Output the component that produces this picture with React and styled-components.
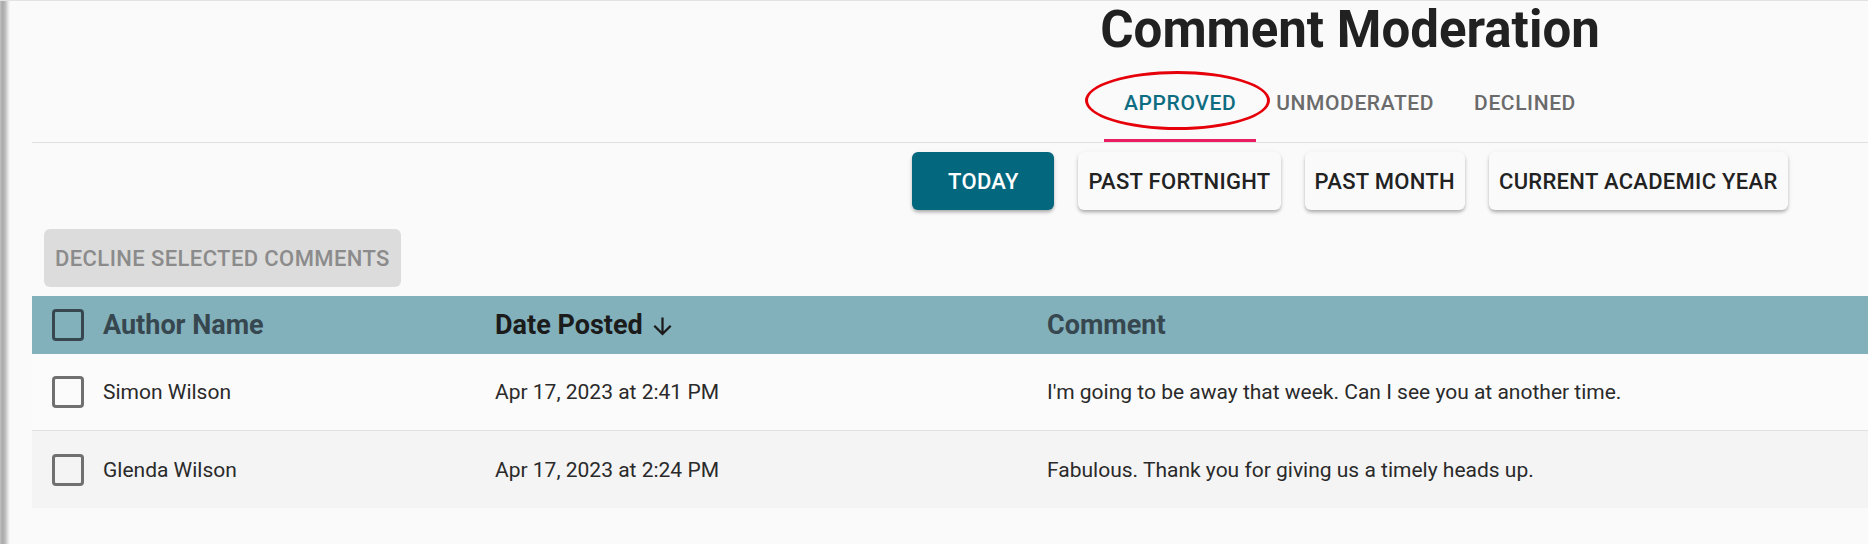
import React, { useState } from "react";
import styled, { createGlobalStyle, css } from "styled-components";

const GlobalStyle = createGlobalStyle`
  html, body {
    margin: 0;
    padding: 0;
    overflow: hidden;
    background: #fafafa;
  }
  body {
    font-family: Roboto, "Liberation Sans", Arial, sans-serif;
    -webkit-font-smoothing: antialiased;
  }
  * {
    box-sizing: border-box;
  }
`;

const Frame = styled.div`
  display: flex;
  min-height: 544px;
  border-top: 1px solid #e2e2e2;
  background: #fafafa;
`;

const EdgeBar = styled.div`
  flex: 0 0 10px;
  background: linear-gradient(
    to right,
    #c6c6c6 0,
    #a9a9a9 2px,
    #b9b9b9 5px,
    #e4e4e4 8px,
    #fafafa 10px
  );
`;

const Page = styled.main`
  flex: 0 0 2636px;
  margin-left: 22px;
`;

const Header = styled.header`
  display: flex;
  flex-direction: column;
  align-items: center;
`;

const Title = styled.h1`
  margin: 0;
  font-size: 51px;
  line-height: 58px;
  font-weight: 700;
  color: #212121;
`;

const TabBar = styled.nav`
  align-self: stretch;
  display: flex;
  justify-content: center;
  border-bottom: 1px solid #e0e0e0;
`;

const Tab = styled.button`
  position: relative;
  height: 83px;
  padding: 4px 20px 0;
  border: 0;
  background: transparent;
  font-family: inherit;
  font-size: 21px;
  font-weight: 500;
  letter-spacing: 0.6px;
  text-transform: uppercase;
  color: ${(p) => (p.$active ? "#0f6d82" : "#6b6b6b")};
  cursor: pointer;

  ${(p) =>
    p.$active &&
    css`
      &::after {
        content: "";
        position: absolute;
        left: 0;
        right: 0;
        bottom: 0;
        height: 3px;
        background: #e91e63;
      }
    `}
`;

const Highlight = styled.span`
  position: absolute;
  left: -19px;
  top: 12px;
  width: 185px;
  height: 59px;
  border: 3.5px solid #e5000a;
  border-radius: 50%;
  pointer-events: none;
`;

const FilterRow = styled.div`
  display: flex;
  justify-content: center;
  gap: 24px;
  margin-top: 9px;
`;

const FilterButton = styled.button`
  height: 58px;
  min-width: 142px;
  padding: 0 10px;
  border: 0;
  border-radius: 6px;
  font-family: inherit;
  font-size: 22px;
  font-weight: 500;
  letter-spacing: 0.3px;
  text-transform: uppercase;
  cursor: pointer;
  background: ${(p) => (p.$active ? "#03677e" : "#fafafa")};
  color: ${(p) => (p.$active ? "#ffffff" : "#222222")};
  box-shadow: 0 3px 4px -1px rgba(0, 0, 0, 0.2), 0 2px 3px rgba(0, 0, 0, 0.12),
    0 1px 6px rgba(0, 0, 0, 0.06);
`;

const ActionRow = styled.div`
  margin-top: 19px;
  padding-left: 12px;
`;

const DeclineButton = styled.button`
  height: 58px;
  padding: 0 11px;
  border: 0;
  border-radius: 6px;
  background: #dcdcdc;
  color: #8b8b8b;
  font-family: inherit;
  font-size: 22px;
  font-weight: 500;
  letter-spacing: 0.4px;
  text-transform: uppercase;
`;

const Table = styled.div`
  margin-top: 9px;
`;

const Row = styled.div`
  display: grid;
  grid-template-columns: 71px 392px 552px 1fr;
  align-items: center;
  height: ${(p) => (p.$head ? "58px" : "77px")};
  background: ${(p) => p.$bg};
  border-bottom: ${(p) => (p.$divider ? "1px solid #e0e0e0" : "0")};
`;

const Cell = styled.div`
  display: flex;
  align-items: center;
  font-size: ${(p) => (p.$head ? "27px" : "21px")};
  font-weight: ${(p) => (p.$head ? 700 : 400)};
  color: ${(p) => (p.$head ? (p.$sorted ? "#1b1b1b" : "#37474f") : "#2a2a2a")};
  white-space: nowrap;
`;

const CheckCell = styled.div`
  display: flex;
  align-items: center;
  padding-left: 20px;
`;

const Box = styled.span`
  display: block;
  width: 32px;
  height: 32px;
  border: 3px solid ${(p) => (p.$head ? "#37474f" : "#707070")};
  border-radius: 4px;
`;

const SortIcon = styled.svg`
  width: 27px;
  height: 27px;
  margin-left: 6px;
  margin-top: 3px;
  fill: #1b1b1b;
`;

const comments = [
  {
    id: 1,
    author: "Simon Wilson",
    date: "Apr 17, 2023 at 2:41 PM",
    text: "I'm going to be away that week. Can I see you at another time.",
  },
  {
    id: 2,
    author: "Glenda Wilson",
    date: "Apr 17, 2023 at 2:24 PM",
    text: "Fabulous. Thank you for giving us a timely heads up.",
  },
];

const tabs = ["Approved", "Unmoderated", "Declined"];
const ranges = ["Today", "Past Fortnight", "Past Month", "Current Academic Year"];

function App() {
  const [tab, setTab] = useState("Approved");
  const [range, setRange] = useState("Today");

  return (
    <Frame>
      <GlobalStyle />
      <EdgeBar />
      <Page>
        <Header>
          <Title>Comment Moderation</Title>
          <TabBar>
            {tabs.map((t) => (
              <Tab key={t} $active={t === tab} onClick={() => setTab(t)}>
                {t}
                {t === "Approved" && <Highlight />}
              </Tab>
            ))}
          </TabBar>
        </Header>

        <FilterRow>
          {ranges.map((r) => (
            <FilterButton key={r} $active={r === range} onClick={() => setRange(r)}>
              {r}
            </FilterButton>
          ))}
        </FilterRow>

        <ActionRow>
          <DeclineButton disabled>Decline selected comments</DeclineButton>
        </ActionRow>

        <Table>
          <Row $head $bg="#82b1bc">
            <CheckCell>
              <Box $head />
            </CheckCell>
            <Cell $head>Author Name</Cell>
            <Cell $head $sorted>
              Date Posted
              <SortIcon viewBox="0 0 24 24">
                <path d="M20 12l-1.41-1.41L13 16.17V4h-2v12.17l-5.58-5.59L4 12l8 8 8-8z" />
              </SortIcon>
            </Cell>
            <Cell $head>Comment</Cell>
          </Row>
          {comments.map((c, i) => (
            <Row
              key={c.id}
              $bg={i % 2 ? "#f4f4f4" : "#fbfbfb"}
              $divider={i < comments.length - 1}
            >
              <CheckCell>
                <Box />
              </CheckCell>
              <Cell>{c.author}</Cell>
              <Cell>{c.date}</Cell>
              <Cell>{c.text}</Cell>
            </Row>
          ))}
        </Table>
      </Page>
    </Frame>
  );
}

export default App;
